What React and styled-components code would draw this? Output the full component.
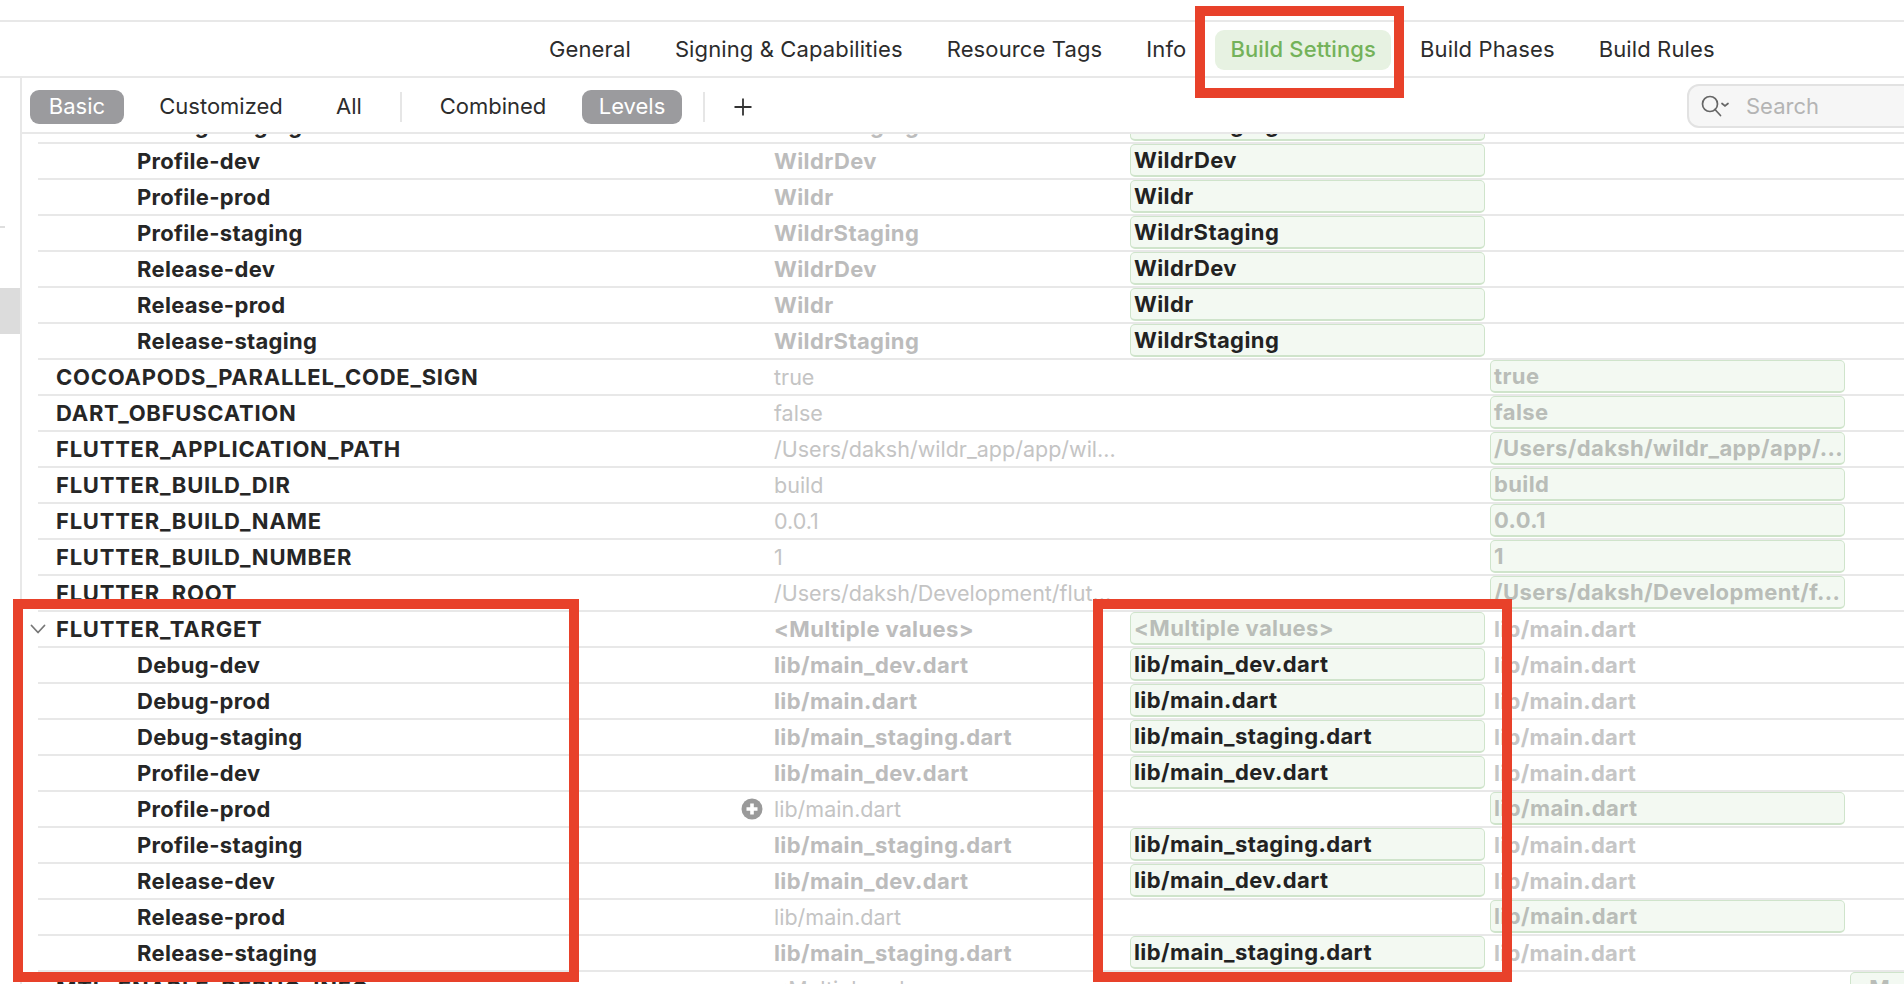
import React from 'react';
import styled, { createGlobalStyle } from 'styled-components';

const GlobalStyle = createGlobalStyle`
  html, body {
    margin: 0;
    padding: 0;
    height: 100%;
    overflow: hidden;
    background: #fff;
    font-family: Inter, "Liberation Sans", sans-serif;
  }
  * { box-sizing: border-box; }
`;

const Page = styled.div`
  position: relative;
  width: 1904px;
  height: 984px;
  overflow: hidden;
  background: #fff;
  padding-top: 20px;
`;
const TabBar = styled.div`
  height: 58px;
  border-top: 2px solid #e8e8e8;
  border-bottom: 2px solid #e8e8e8;
  display: flex;
  align-items: center;
  padding-left: 534px;
  padding-top: 2px;
  gap: 14px;
`;
const Tab = styled.div`
  height: 40px;
  padding: 0 15px 2px;
  display: flex;
  align-items: center;
  border-radius: 9px;
  font-size: 22px;
  letter-spacing: 0.12px;
  color: ${(p) => (p.$active ? '#74b25a' : '#2c2c2c')};
  background: ${(p) => (p.$active ? '#e7f2e2' : 'transparent')};
  font-weight: ${(p) => (p.$active ? 500 : 400)};
  white-space: nowrap;
`;
const Body = styled.div`
  display: flex;
  height: 906px;
`;
const Sidebar = styled.div`
  width: 22px;
  flex: none;
  border-right: 2px solid #e8e8e8;
  padding-top: 148px;
`;
const SidebarTick = styled.div`
  width: 5px;
  height: 2px;
  background: #dedede;
  margin-bottom: 60px;
`;
const SidebarSelected = styled.div`
  height: 46px;
  background: #dcdcdc;
`;
const Main = styled.div`
  flex: 1;
  min-width: 0;
  display: flex;
  flex-direction: column;
`;
const FilterBar = styled.div`
  height: 56px;
  flex: none;
  border-bottom: 2px solid #e8e8e8;
  display: flex;
  align-items: center;
  padding-left: 8px;
  padding-top: 4px;
  position: relative;
`;
const FilterChip = styled.div`
  height: 34px;
  width: ${(p) => p.$w}px;
  margin-left: ${(p) => p.$ml || 0}px;
  padding-bottom: 2px;
  display: flex;
  align-items: center;
  justify-content: center;
  border-radius: 9px;
  font-size: 22px;
  white-space: nowrap;
  color: ${(p) => (p.$active ? '#fff' : '#2c2c2c')};
  background: ${(p) => (p.$active ? '#9b9b9e' : 'transparent')};
`;
const FilterDivider = styled.div`
  width: 2px;
  height: 30px;
  background: #e6e6e6;
  margin-left: ${(p) => p.$ml}px;
`;
const PlusButton = styled.div`
  margin-left: 29px;
  display: flex;
  color: #333;
`;
const SearchBox = styled.div`
  margin-left: auto;
  width: 300px;
  margin-right: -83px;
  height: 44px;
  margin-top: -2px;
  border: 2px solid #e2e2e2;
  border-radius: 12px;
  background: #f6f6f6;
  display: flex;
  align-items: center;
  padding-left: 11px;
  gap: 14px;
  font-size: 22px;
  color: #b4b4b4;
`;
const TableViewport = styled.div`
  flex: 1;
  min-height: 0;
  overflow: hidden;
`;
const Table = styled.div`
  margin-top: -26px;
`;
const Row = styled.div`
  height: 36px;
  margin-left: 16px;
  border-bottom: 2px solid #e8e8e8;
  display: grid;
  grid-template-columns: 736px 356px 360px 360px 1fr;
  align-items: center;
  white-space: nowrap;
`;
const KeyCell = styled.div`
  display: flex;
  align-items: center;
  padding-left: ${(p) => (p.$child ? 99 : 18)}px;
  font-size: 22px;
  font-weight: 700;
  letter-spacing: ${(p) => (p.$child ? 0.3 : 0.75)}px;
  color: #262626;
`;
const Chevron = styled.svg`
  width: 16px;
  height: 10px;
  margin-left: -26px;
  margin-right: 10px;
  flex: none;
  color: #777;
`;
const ValueCell = styled.div`
  position: relative;
  font-size: ${(p) => (p.$bold ? 22 : 21.5)}px;
  font-weight: ${(p) => (p.$bold ? 700 : 400)};
  letter-spacing: ${(p) => (p.$bold ? 0.4 : 0)}px;
  color: ${(p) => (p.$bold ? '#bcbcbc' : '#c4c4c4')};
`;
const AddIcon = styled.svg`
  position: absolute;
  left: -33px;
  top: 50%;
  margin-top: -11px;
  width: 22px;
  height: 22px;
`;
const ValueBox = styled.div`
  width: 355px;
  height: 33px;
  padding-left: 3px;
  margin-top: -2px;
  display: flex;
  align-items: center;
  border: 1.5px solid #cfe4cb;
  border-bottom-width: 2.5px;
  border-radius: 5px;
  background: #f3f9f2;
  font-size: 22px;
  font-weight: 700;
  letter-spacing: 0.4px;
  color: ${(p) => (p.$muted ? '#b9bdb8' : '#222')};
  overflow: hidden;
`;
const PlainResolved = styled.div`
  padding-left: 4px;
  font-size: 22px;
  font-weight: 700;
  letter-spacing: 0.3px;
  color: #c6c6c6;
`;
const Highlight = styled.div`
  position: absolute;
  left: ${(p) => p.$x}px;
  top: ${(p) => p.$y}px;
  width: ${(p) => p.$w}px;
  height: ${(p) => p.$h}px;
  border: 10px solid #e8412a;
  pointer-events: none;
`;

const ChevronDown = () => (
  <Chevron viewBox="0 0 16 10" fill="none" stroke="currentColor" strokeWidth="1.8" strokeLinecap="round" strokeLinejoin="round">
    <path d="M1.5 1.5 L8 8.5 L14.5 1.5" />
  </Chevron>
);

const AddCircle = () => (
  <AddIcon viewBox="0 0 22 22">
    <circle cx="11" cy="11" r="10.5" fill="#9a9a9a" />
    <path d="M11 5.5v11M5.5 11h11" stroke="#fff" strokeWidth="3.6" />
  </AddIcon>
);

const SearchGlyph = () => (
  <svg width="32" height="24" viewBox="0 0 32 24" fill="none" stroke="#666" strokeWidth="1.7" strokeLinecap="round">
    <circle cx="10" cy="10" r="7.5" />
    <path d="M15 15.5 L20.5 21.5" />
    <path d="M22 9.5 L25 12 L28 9.5" />
  </svg>
);

const PlusGlyph = () => (
  <svg width="18" height="18" viewBox="0 0 18 18" stroke="currentColor" strokeWidth="1.8">
    <path d="M9 0.5v17M0.5 9h17" />
  </svg>
);

const tabs = ['General', 'Signing & Capabilities', 'Resource Tags', 'Info', 'Build Settings', 'Build Phases', 'Build Rules'];

const wildr = (name, value) => ({ name, child: true, v1: value, v1Bold: true, v2: value, v2Dark: true });

const target = (name, value, inherited) => (
  inherited
    ? { name, child: true, v1: 'lib/main.dart', add: name === 'Profile-prod', v3: 'lib/main.dart' }
    : { name, child: true, v1: value, v1Bold: true, v2: value, v2Dark: true, v3Plain: 'lib/main.dart' }
);

const inheritedRow = (name, value, v1 = value) => ({ name, v1, v3: value });

const rows = [
  wildr('Debug-staging', 'WildrStaging'),
  wildr('Profile-dev', 'WildrDev'),
  wildr('Profile-prod', 'Wildr'),
  wildr('Profile-staging', 'WildrStaging'),
  wildr('Release-dev', 'WildrDev'),
  wildr('Release-prod', 'Wildr'),
  wildr('Release-staging', 'WildrStaging'),
  inheritedRow('COCOAPODS_PARALLEL_CODE_SIGN', 'true'),
  inheritedRow('DART_OBFUSCATION', 'false'),
  inheritedRow('FLUTTER_APPLICATION_PATH', '/Users/daksh/wildr_app/app/...', '/Users/daksh/wildr_app/app/wil...'),
  inheritedRow('FLUTTER_BUILD_DIR', 'build'),
  inheritedRow('FLUTTER_BUILD_NAME', '0.0.1'),
  inheritedRow('FLUTTER_BUILD_NUMBER', '1'),
  inheritedRow('FLUTTER_ROOT', '/Users/daksh/Development/f...', '/Users/daksh/Development/flut...'),
  { name: 'FLUTTER_TARGET', open: true, v1: '<Multiple values>', v1Bold: true, v2: '<Multiple values>', v3Plain: 'lib/main.dart' },
  target('Debug-dev', 'lib/main_dev.dart'),
  target('Debug-prod', 'lib/main.dart'),
  target('Debug-staging', 'lib/main_staging.dart'),
  target('Profile-dev', 'lib/main_dev.dart'),
  target('Profile-prod', '', true),
  target('Profile-staging', 'lib/main_staging.dart'),
  target('Release-dev', 'lib/main_dev.dart'),
  target('Release-prod', '', true),
  target('Release-staging', 'lib/main_staging.dart'),
  { name: 'MTL_ENABLE_DEBUG_INFO', v1: '<Multiple values>', v4: '<Multiple values>' },
];

const SettingRow = ({ row }) => (
  <Row>
    <KeyCell $child={row.child}>
      {row.open && <ChevronDown />}
      {row.name}
    </KeyCell>
    <ValueCell $bold={row.v1Bold}>
      {row.add && <AddCircle />}
      {row.v1}
    </ValueCell>
    <div>{row.v2 && <ValueBox $muted={!row.v2Dark}>{row.v2}</ValueBox>}</div>
    <div>
      {row.v3 && <ValueBox $muted>{row.v3}</ValueBox>}
      {row.v3Plain && <PlainResolved>{row.v3Plain}</PlainResolved>}
    </div>
    <div>{row.v4 && <ValueBox $muted>{row.v4}</ValueBox>}</div>
  </Row>
);

export default function App() {
  return (
    <Page>
      <GlobalStyle />
      <TabBar>
        {tabs.map((t) => (
          <Tab key={t} $active={t === 'Build Settings'}>{t}</Tab>
        ))}
      </TabBar>
      <Body>
        <Sidebar>
          <SidebarTick />
          <SidebarSelected />
        </Sidebar>
        <Main>
          <FilterBar>
            <FilterChip $active $w={94}>Basic</FilterChip>
            <FilterChip $w={124} $ml={35}>Customized</FilterChip>
            <FilterChip $w={26} $ml={53}>All</FilterChip>
            <FilterDivider $ml={38} />
            <FilterChip $w={106} $ml={38}>Combined</FilterChip>
            <FilterChip $active $w={100} $ml={36}>Levels</FilterChip>
            <FilterDivider $ml={21} />
            <PlusButton><PlusGlyph /></PlusButton>
            <SearchBox>
              <SearchGlyph />
              Search
            </SearchBox>
          </FilterBar>
          <TableViewport>
            <Table>
              {rows.map((r, i) => <SettingRow key={i} row={r} />)}
            </Table>
          </TableViewport>
        </Main>
      </Body>
      <Highlight $x={1195} $y={6} $w={209} $h={92} />
      <Highlight $x={13} $y={599} $w={566} $h={383} />
      <Highlight $x={1093} $y={599} $w={419} $h={383} />
    </Page>
  );
}
